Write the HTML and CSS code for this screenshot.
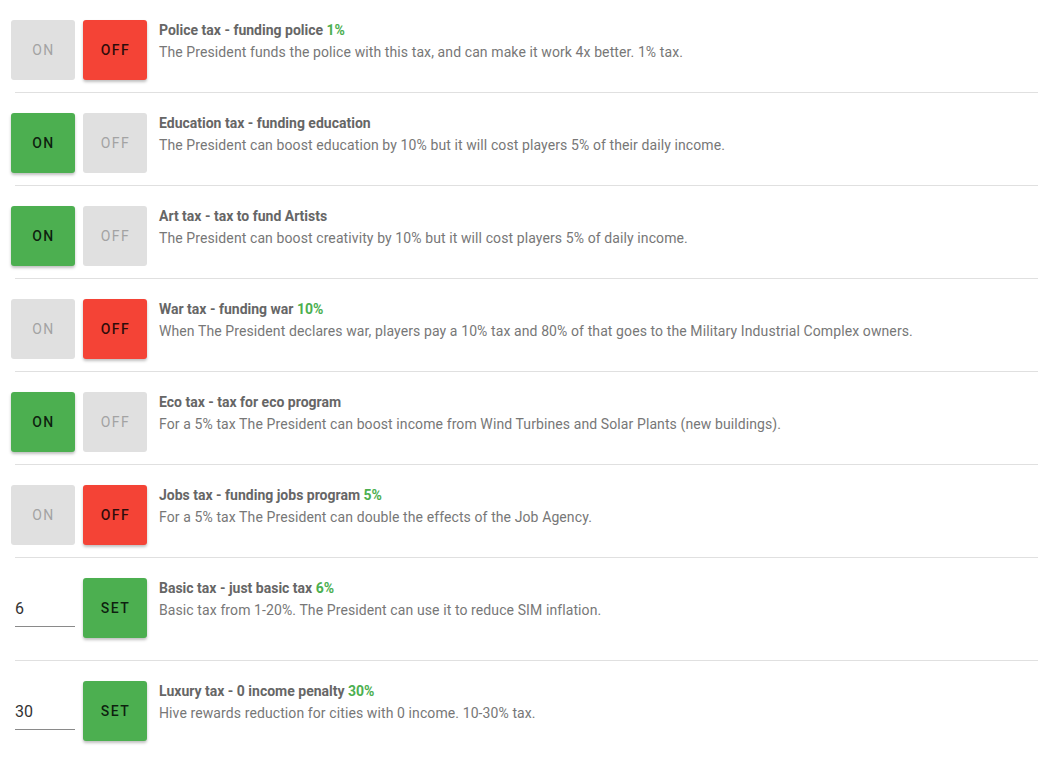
FILE: index.html
```html
<!DOCTYPE html>
<html>
<head>
<meta charset="utf-8">
<link rel="stylesheet" href="styles.css">
</head>
<body>
<div class="list">
  <div class="row">
    <div class="controls">
      <button class="btn off-state">ON</button>
      <button class="btn red">OFF</button>
    </div>
    <div class="info">
      <div class="title">Police tax - funding police <span class="pct">1%</span></div>
      <div class="desc">The President funds the police with this tax, and can make it work 4x better. 1% tax.</div>
    </div>
  </div>
  <div class="row">
    <div class="controls">
      <button class="btn green">ON</button>
      <button class="btn off-state">OFF</button>
    </div>
    <div class="info">
      <div class="title">Education tax - funding education</div>
      <div class="desc">The President can boost education by 10% but it will cost players 5% of their daily income.</div>
    </div>
  </div>
  <div class="row">
    <div class="controls">
      <button class="btn green">ON</button>
      <button class="btn off-state">OFF</button>
    </div>
    <div class="info">
      <div class="title">Art tax - tax to fund Artists</div>
      <div class="desc">The President can boost creativity by 10% but it will cost players 5% of daily income.</div>
    </div>
  </div>
  <div class="row">
    <div class="controls">
      <button class="btn off-state">ON</button>
      <button class="btn red">OFF</button>
    </div>
    <div class="info">
      <div class="title">War tax - funding war <span class="pct">10%</span></div>
      <div class="desc">When The President declares war, players pay a 10% tax and 80% of that goes to the Military Industrial Complex owners.</div>
    </div>
  </div>
  <div class="row">
    <div class="controls">
      <button class="btn green">ON</button>
      <button class="btn off-state">OFF</button>
    </div>
    <div class="info">
      <div class="title">Eco tax - tax for eco program</div>
      <div class="desc">For a 5% tax The President can boost income from Wind Turbines and Solar Plants (new buildings).</div>
    </div>
  </div>
  <div class="row">
    <div class="controls">
      <button class="btn off-state">ON</button>
      <button class="btn red">OFF</button>
    </div>
    <div class="info">
      <div class="title">Jobs tax - funding jobs program <span class="pct">5%</span></div>
      <div class="desc">For a 5% tax The President can double the effects of the Job Agency.</div>
    </div>
  </div>
  <div class="row row-input">
    <div class="controls">
      <input class="num" type="text" value="6">
      <button class="btn green">SET</button>
    </div>
    <div class="info">
      <div class="title">Basic tax - just basic tax <span class="pct">6%</span></div>
      <div class="desc">Basic tax from 1-20%. The President can use it to reduce SIM inflation.</div>
    </div>
  </div>
  <div class="row row-input last">
    <div class="controls">
      <input class="num" type="text" value="30">
      <button class="btn green">SET</button>
    </div>
    <div class="info">
      <div class="title">Luxury tax - 0 income penalty <span class="pct">30%</span></div>
      <div class="desc">Hive rewards reduction for cities with 0 income. 10-30% tax.</div>
    </div>
  </div>
</div>
</body>
</html>
```

FILE: styles.css
```css
* { box-sizing: border-box; }
html, body { background: #fff; }
body {
  margin: 0;
  font-family: Roboto, "Liberation Sans", sans-serif;
}
.list {
  width: 1050px;
  padding: 0 12px 0 11px;
}
.row {
  display: flex;
  align-items: flex-start;
  padding: 20px 0 12px;
  position: relative;
}
.row::after {
  content: "";
  position: absolute;
  left: 4px;
  right: 0;
  bottom: -1px;
  height: 1px;
  background: #e0e0e0;
}
.row + .row { margin-top: 1px; }
.row-input { padding-bottom: 22px; }
.row-input + .row-input { padding-top: 20px; }
.last::after { display: none; }
.controls {
  display: flex;
  gap: 8px;
  flex: none;
  align-items: flex-start;
}
.btn {
  width: 64px;
  height: 60px;
  border: none;
  border-radius: 3px;
  font-family: Roboto, "Liberation Sans", sans-serif;
  font-size: 14px;
  font-weight: 500;
  letter-spacing: 1.5px;
  padding: 0 0 0 1px;
  color: rgba(0, 0, 0, 0.82);
}
.off-state {
  background: #e0e0e0;
  color: #a3a3a3;
  font-weight: 400;
}
.red {
  background: #f44336;
  box-shadow: 0 2px 3px rgba(0,0,0,0.25);
}
.green {
  background: #4caf50;
  box-shadow: 0 2px 3px rgba(0,0,0,0.25);
}
.num {
  width: 60px;
  margin: 16px 0 0 4px;
  border: none;
  border-bottom: 1px solid #8a8a8a;
  font-family: Roboto, "Liberation Sans", sans-serif;
  font-size: 16px;
  color: #333;
  padding: 5px 0 8px;
  outline: none;
  background: transparent;
}
.info {
  margin-left: 12px;
}
.title {
  font-size: 14px;
  font-weight: 700;
  color: #666;
  line-height: 20px;
}
.pct { color: #4caf50; }
.desc {
  font-size: 14px;
  color: #777;
  line-height: 24px;
  letter-spacing: 0.1px;
}
```
